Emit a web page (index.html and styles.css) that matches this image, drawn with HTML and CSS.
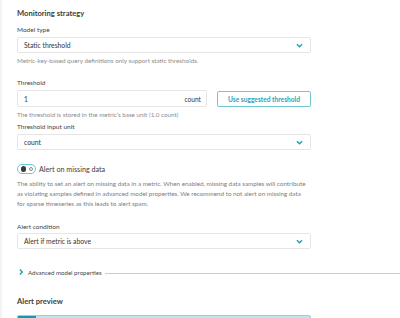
FILE: index.html
```html
<!DOCTYPE html>
<html>
<head>
<meta charset="utf-8">
<link rel="stylesheet" href="styles.css">
</head>
<body>
<div class="page">
  <h2 class="heading">Monitoring strategy</h2>

  <div class="label l-model">Model type</div>
  <div class="select">
    <span>Static threshold</span>
    <svg class="chev" viewBox="0 0 8 5" width="7" height="5"><path d="M1 1 L4 4 L7 1" fill="none" stroke="#1ea3b5" stroke-width="1.6"/></svg>
  </div>
  <div class="helper h1">Metric-key-based query definitions only support static thresholds.</div>

  <div class="label l-thr">Threshold</div>
  <div class="thr-row">
    <div class="input"><span>1</span><span class="unit">count</span></div>
    <button class="btn">Use suggested threshold</button>
  </div>
  <div class="helper h2">The threshold is stored in the metric’s base unit (1.0 count)</div>

  <div class="label l-unit">Threshold input unit</div>
  <div class="select">
    <span>count</span>
    <svg class="chev" viewBox="0 0 8 5" width="7" height="5"><path d="M1 1 L4 4 L7 1" fill="none" stroke="#1ea3b5" stroke-width="1.6"/></svg>
  </div>

  <div class="toggle-row">
    <span class="toggle"><span class="knob"></span><span class="ring"></span></span>
    <span class="toggle-label">Alert on missing data</span>
  </div>
  <p class="para">The ability to set an alert on missing data in a metric. When enabled, missing data samples will contribute as violating samples defined in advanced model properties. We recommend to not alert on missing data for sparse timeseries as this leads to alert spam.</p>

  <div class="label l-cond">Alert condition</div>
  <div class="select">
    <span>Alert if metric is above</span>
    <svg class="chev" viewBox="0 0 8 5" width="7" height="5"><path d="M1 1 L4 4 L7 1" fill="none" stroke="#1ea3b5" stroke-width="1.6"/></svg>
  </div>

  <div class="adv">
    <svg class="adv-chev" viewBox="0 0 4 6" width="4" height="6"><path d="M0.8 0.6 L3.2 3 L0.8 5.4" fill="none" stroke="#1ea3b5" stroke-width="1.4"/></svg>
    <span class="adv-text">Advanced model properties</span>
    <span class="adv-line"></span>
  </div>

  <h2 class="heading h-preview">Alert preview</h2>
  <div class="preview-bar"><span class="preview-fill"></span></div>
</div>
</body>
</html>
```

FILE: styles.css
```css
* { box-sizing: border-box; }
html, body {
  margin: 0;
  padding: 0;
  background: #ffffff;
}
body {
  width: 400px;
  font-family: Lato, "Open Sans", sans-serif;
  color: #454646;
  border-left: 2px solid #f4f4f4;
}
.page {
  padding-left: 15px;
  padding-top: 9px;
}
.heading {
  margin: 0;
  font-size: 7.6px;
  line-height: 9px;
  font-weight: 700;
  color: #3d3d3d;
}
.label {
  font-size: 6.5px;
  line-height: 8px;
  color: #454646;
}
.l-model { margin-top: 8px; }
.l-thr { margin-top: 14px; }
.l-unit { margin-top: 4px; }
.l-cond { margin-top: 14px; }

.select {
  margin-top: 3px;
  width: 294px;
  height: 16px;
  border: 1.5px solid #e6e6e6;
  border-radius: 2px;
  display: flex;
  align-items: center;
  justify-content: space-between;
  padding: 0 7px 0 6px;
  font-size: 6.8px;
  color: #353535;
}
.l-cond + .select { margin-top: 2px; }
.chev { display: block; }

.helper {
  margin-top: 4px;
  font-size: 6.3px;
  line-height: 8px;
  color: #8c8c8c;
}

.thr-row {
  margin-top: 3px;
  display: flex;
  gap: 10px;
  align-items: center;
}
.input {
  width: 190px;
  height: 17px;
  border: 1.5px solid #e6e6e6;
  border-radius: 2px;
  display: flex;
  align-items: center;
  justify-content: space-between;
  padding: 0 5px 0 6px;
  font-size: 6.6px;
  color: #353535;
}
.btn {
  width: 94px;
  height: 16px;
  margin: 0;
  padding: 0;
  background: #ffffff;
  border: 1px solid #70c8d4;
  border-radius: 2px;
  font-family: Lato, "Open Sans", sans-serif;
  font-size: 6.6px;
  font-weight: 700;
  color: #2aa3b4;
}

.toggle-row {
  margin-top: 14px;
  height: 10px;
  display: flex;
  align-items: center;
  gap: 3px;
}
.toggle {
  width: 19px;
  height: 10px;
  border: 1px solid #6cc6d3;
  border-radius: 5px;
  display: flex;
  align-items: center;
  padding: 0 2px 0 2.5px;
  gap: 3px;
  background: #ffffff;
}
.knob {
  width: 5.5px;
  height: 5.5px;
  border-radius: 50%;
  background: #3a3a3a;
}
.ring {
  width: 4px;
  height: 4px;
  border-radius: 50%;
  border: 0.8px solid #8a8a8a;
}
.toggle-label {
  font-size: 7.2px;
  color: #3d3d3d;
}

.para {
  margin: 5px 0 0 0;
  width: 291px;
  font-size: 6.3px;
  line-height: 10px;
  color: #7e7e7e;
}

.adv {
  margin-top: 19px;
  height: 8px;
  display: flex;
  align-items: center;
  margin-left: 2px;
}
.adv-chev { display: block; margin-right: 5px; }
.adv-text {
  font-size: 6.1px;
  color: #454646;
  white-space: nowrap;
}
.adv-line {
  flex: 1;
  height: 1px;
  background: #cccccc;
  margin-left: 3px;
  margin-top: 3px;
}

.h-preview { margin-top: 21px; }
.preview-bar {
  margin-top: 9px;
  width: 294px;
  height: 8px;
  background: #b9e7ed;
  border: 1px solid #8fd6e0;
  border-radius: 2px 2px 0 0;
  display: flex;
}
.preview-fill {
  width: 18px;
  background: #0c9eb0;
}
```
